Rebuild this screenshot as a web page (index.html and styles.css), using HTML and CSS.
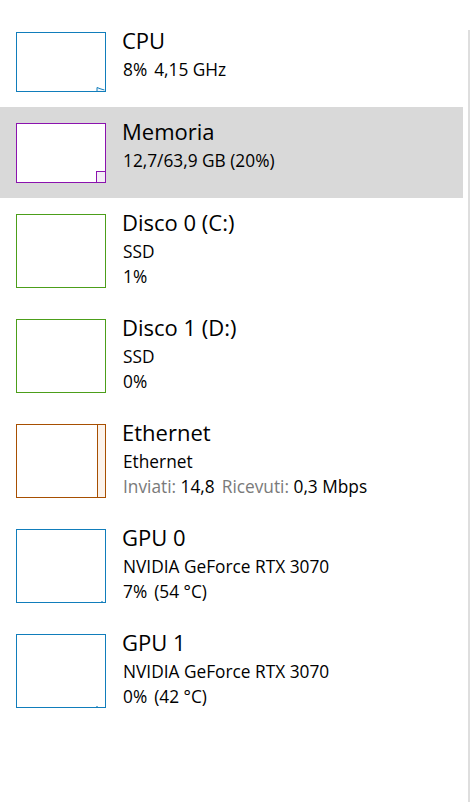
FILE: index.html
```html
<!DOCTYPE html>
<html lang="it">
<head>
<meta charset="utf-8">
<title>Prestazioni</title>
<link rel="stylesheet" href="styles.css">
</head>
<body>
<div class="page">
  <ul class="list">
    <li class="row">
      <svg class="graph" width="90" height="60" viewBox="0 0 90 60">
        <polygon points="81,59 81,56 88,58.5 88,59" fill="#f1f6fa"/>
        <polyline points="81,59 81,55.5 85,57 88.5,58" fill="none" stroke="#117dbb" stroke-width="1"/>
        <rect x="0.5" y="0.5" width="89" height="59" fill="none" stroke="#117dbb"/>
      </svg>
      <div class="info">
        <div class="title">CPU</div>
        <div class="sub">
          <div class="line"><span class="gap">8%</span>4,15 GHz</div>
        </div>
      </div>
    </li>
    <li class="row selected">
      <svg class="graph" width="90" height="60" viewBox="0 0 90 60">
        <rect x="0" y="0" width="90" height="60" fill="#fff"/>
        <rect x="80.5" y="48.5" width="9" height="11" fill="#f4eef6" stroke="#8b12ae"/>
        <rect x="0.5" y="0.5" width="89" height="59" fill="none" stroke="#8b12ae"/>
      </svg>
      <div class="info">
        <div class="title">Memoria</div>
        <div class="sub">
          <div class="line">12,7/63,9 GB (20%)</div>
        </div>
      </div>
    </li>
    <li class="row">
      <svg class="graph" width="90" height="74" viewBox="0 0 90 74">
        <rect x="0.5" y="0.5" width="89" height="73" fill="none" stroke="#4c9e1a"/>
      </svg>
      <div class="info">
        <div class="title">Disco 0 (C:)</div>
        <div class="sub">
          <div class="line">SSD</div>
          <div class="line">1%</div>
        </div>
      </div>
    </li>
    <li class="row">
      <svg class="graph" width="90" height="74" viewBox="0 0 90 74">
        <rect x="0.5" y="0.5" width="89" height="73" fill="none" stroke="#4c9e1a"/>
      </svg>
      <div class="info">
        <div class="title">Disco 1 (D:)</div>
        <div class="sub">
          <div class="line">SSD</div>
          <div class="line">0%</div>
        </div>
      </div>
    </li>
    <li class="row">
      <svg class="graph" width="90" height="74" viewBox="0 0 90 74">
        <rect x="81" y="0" width="9" height="74" fill="#fcf3eb"/>
        <line x1="81.5" y1="0" x2="81.5" y2="74" stroke="#a74f01"/>
        <rect x="0.5" y="0.5" width="89" height="73" fill="none" stroke="#a74f01"/>
      </svg>
      <div class="info">
        <div class="title">Ethernet</div>
        <div class="sub">
          <div class="line">Ethernet</div>
          <div class="line"><span class="label">Inviati:</span> <span class="gap">14,8</span><span class="label">Ricevuti:</span> 0,3 Mbps</div>
        </div>
      </div>
    </li>
    <li class="row">
      <svg class="graph" width="90" height="74" viewBox="0 0 90 74">
        <line x1="85" y1="72.5" x2="87" y2="72.5" stroke="#117dbb" stroke-opacity="0.6"/>
        <rect x="0.5" y="0.5" width="89" height="73" fill="none" stroke="#117dbb"/>
      </svg>
      <div class="info">
        <div class="title">GPU 0</div>
        <div class="sub">
          <div class="line">NVIDIA GeForce RTX 3070</div>
          <div class="line"><span class="gap">7%</span>(54 °C)</div>
        </div>
      </div>
    </li>
    <li class="row">
      <svg class="graph" width="90" height="74" viewBox="0 0 90 74">
        <line x1="80" y1="72.5" x2="82" y2="72.5" stroke="#117dbb" stroke-opacity="0.6"/>
        <rect x="0.5" y="0.5" width="89" height="73" fill="none" stroke="#117dbb"/>
      </svg>
      <div class="info">
        <div class="title">GPU 1</div>
        <div class="sub">
          <div class="line">NVIDIA GeForce RTX 3070</div>
          <div class="line"><span class="gap">0%</span>(42 °C)</div>
        </div>
      </div>
    </li>
  </ul>
  <div class="scrollline"></div>
</div>
</body>
</html>
```
FILE: styles.css
```css
* { box-sizing: border-box; }
html, body {
  margin: 0;
  padding: 0;
  background: #fff;
}
body {
  font-family: "Open Sans", "Noto Sans", sans-serif;
  color: #000;
}
.page {
  display: flex;
  min-height: 100vh;
}
.list {
  list-style: none;
  margin: 0;
  padding: 16px 0 0 0;
  width: 463px;
}
.row {
  display: flex;
  align-items: flex-start;
  gap: 16px;
  padding: 16px 0 15px 16px;
}
.row.selected {
  background: #d9d9d9;
}
.graph {
  display: block;
  flex: none;
}
.info {
  display: flex;
  flex-direction: column;
  margin-bottom: -8px;
}
.title {
  margin-top: -2px;
  font-size: 22px;
  line-height: 20px;
}
.sub {
  margin-top: 7px;
  padding-left: 1px;
  font-size: 17.3px;
  line-height: 25px;
}
.line {
  white-space: nowrap;
}
.gap {
  margin-right: 7px;
}
.label {
  color: #7a7a7a;
}
.scrollline {
  width: 2px;
  margin: 30px 0 0 5px;
  background: #dedede;
}
```
